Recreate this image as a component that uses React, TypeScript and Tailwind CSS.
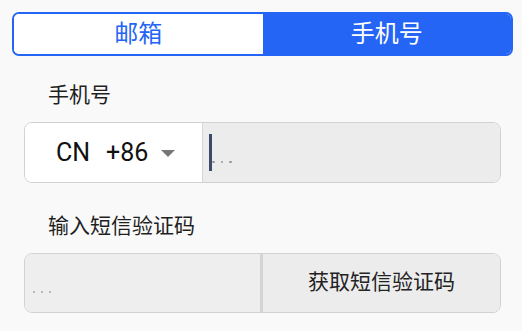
import React, { useState } from 'react';

type Tab = 'email' | 'phone';

const Dots: React.FC<{ className: string }> = ({ className }) => (
  <div className="flex items-center gap-[6px]">
    <span className={className} />
    <span className={className} />
    <span className={className} />
  </div>
);

const App: React.FC = () => {
  const [tab, setTab] = useState<Tab>('phone');

  return (
    <div className="w-[522px] h-[331px] bg-[#f9f9f9] pt-[12px] font-['Roboto','Noto_Sans_CJK_SC',sans-serif] overflow-hidden">
      {/* tabs */}
      <div className="ml-[12px] w-[501px] h-[44px] flex border-[2.5px] border-[#2465f5] rounded-[7px] overflow-hidden">
        <button
          onClick={() => setTab('email')}
          className={`flex-1 flex items-center justify-center text-[24px] ${tab === 'email' ? 'bg-[#2465f5] text-white' : 'bg-white text-[#2465f5]'}`}
        >
          邮箱
        </button>
        <button
          onClick={() => setTab('phone')}
          className={`flex-1 flex items-center justify-center text-[24px] ${tab === 'phone' ? 'bg-[#2465f5] text-white' : 'bg-white text-[#2465f5]'}`}
        >
          手机号
        </button>
      </div>

      <p className="mt-[27px] pl-[48px] text-[21px] leading-[24px] text-[#1f1f1f]">手机号</p>

      <div className="mt-[15px] ml-[24px] w-[477px] h-[61px] flex border-[1.5px] border-[#d2d2d2] rounded-[8px] overflow-hidden">
        <div className="w-[178px] bg-white border-r-[1.5px] border-[#d6d6d6] flex items-center pl-[31px] text-[25px] text-[#111]">
          <span>CN</span>
          <span className="ml-[16px]">+86</span>
          <svg width="14" height="7" viewBox="0 0 14 7" className="ml-[13px] mt-[2px]">
            <path d="M0 0 L14 0 L7 7 Z" fill="#777" />
          </svg>
        </div>
        <div className="flex-1 bg-[#ececec] relative flex items-end pb-[19px] pl-[9px]">
          <span className="absolute left-[6px] top-[11px] w-[3px] h-[37px] bg-[#3e4a6a]" />
          <Dots className="w-[2.5px] h-[2.5px] rounded-full bg-[#999]" />
        </div>
      </div>

      <p className="mt-[31px] pl-[48px] text-[21px] leading-[24px] text-[#1f1f1f]">输入短信验证码</p>

      <div className="mt-[15px] ml-[24px] w-[477px] h-[60px] flex border-[1.5px] border-[#d2d2d2] rounded-[8px] overflow-hidden">
        <div className="w-[238px] bg-[#eeeeee] border-r-[3px] border-[#d4d4d4] flex items-end pb-[19px] pl-[8px]">
          <Dots className="w-[2px] h-[2px] rounded-full bg-[#aaa]" />
        </div>
        <button className="flex-1 bg-[#ececec] flex items-center justify-center text-[21px] text-[#222]">
          获取短信验证码
        </button>
      </div>
    </div>
  );
};

export default App;
